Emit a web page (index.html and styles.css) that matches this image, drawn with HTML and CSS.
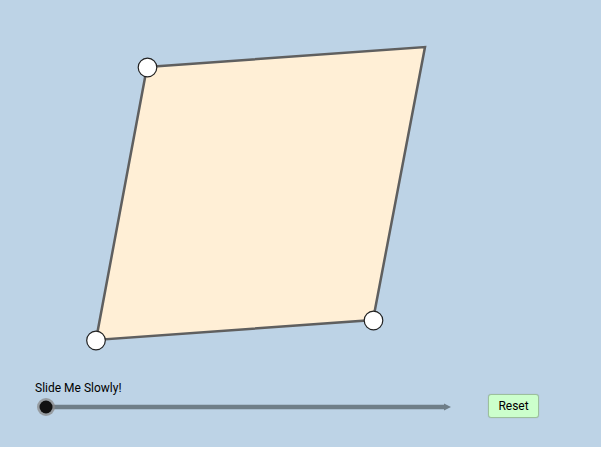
FILE: index.html
```html
<!DOCTYPE html>
<html>
<head>
<meta charset="utf-8">
<link rel="stylesheet" href="styles.css">
</head>
<body>
<div class="applet">
  <svg class="drawing" width="601" height="447" viewBox="0 0 601 447">
    <polygon points="147,67 425,47 373,320 96,340" fill="#ffefd6" stroke="#5f5f5f" stroke-width="2.5" stroke-linejoin="miter"/>
    <circle cx="147.5" cy="67.5" r="9.3" fill="#fff" stroke="#222" stroke-width="1.2"/>
    <circle cx="373.5" cy="320.5" r="9.3" fill="#fff" stroke="#222" stroke-width="1.2"/>
    <circle cx="96" cy="340.5" r="9.3" fill="#fff" stroke="#222" stroke-width="1.2"/>
    <line x1="46" y1="407" x2="445" y2="407" stroke="#6f7e88" stroke-width="4.5"/>
    <polygon points="444,403.5 451,407 444,410.5" fill="#6f7e88"/>
    <circle cx="46" cy="407" r="9" fill="#8a8a8a" opacity="0.75"/>
    <circle cx="46" cy="407" r="6.5" fill="#111"/>
  </svg>
  <div class="label">Slide Me Slowly!</div>
  <button class="reset">Reset</button>
</div>
</body>
</html>
```
FILE: styles.css
```css
html, body {
  margin: 0;
  padding: 0;
  background: #ffffff;
}
.applet {
  position: relative;
  width: 601px;
  height: 447px;
  background: #bdd3e6;
  font-family: Roboto, "Liberation Sans", sans-serif;
  overflow: hidden;
}
.drawing {
  display: block;
}
.label {
  position: absolute;
  left: 35px;
  top: 380px;
  font-size: 12px;
  color: #000;
  line-height: 16px;
}
.reset {
  position: absolute;
  left: 488px;
  top: 394px;
  width: 51px;
  height: 24px;
  padding: 0;
  background: #ccffcc;
  border: 1px solid #9cc09c;
  border-radius: 3px;
  font-family: Roboto, "Liberation Sans", sans-serif;
  font-size: 12px;
  color: #000;
  box-shadow: 0 0 1px rgba(0,0,0,0.2);
}
```
